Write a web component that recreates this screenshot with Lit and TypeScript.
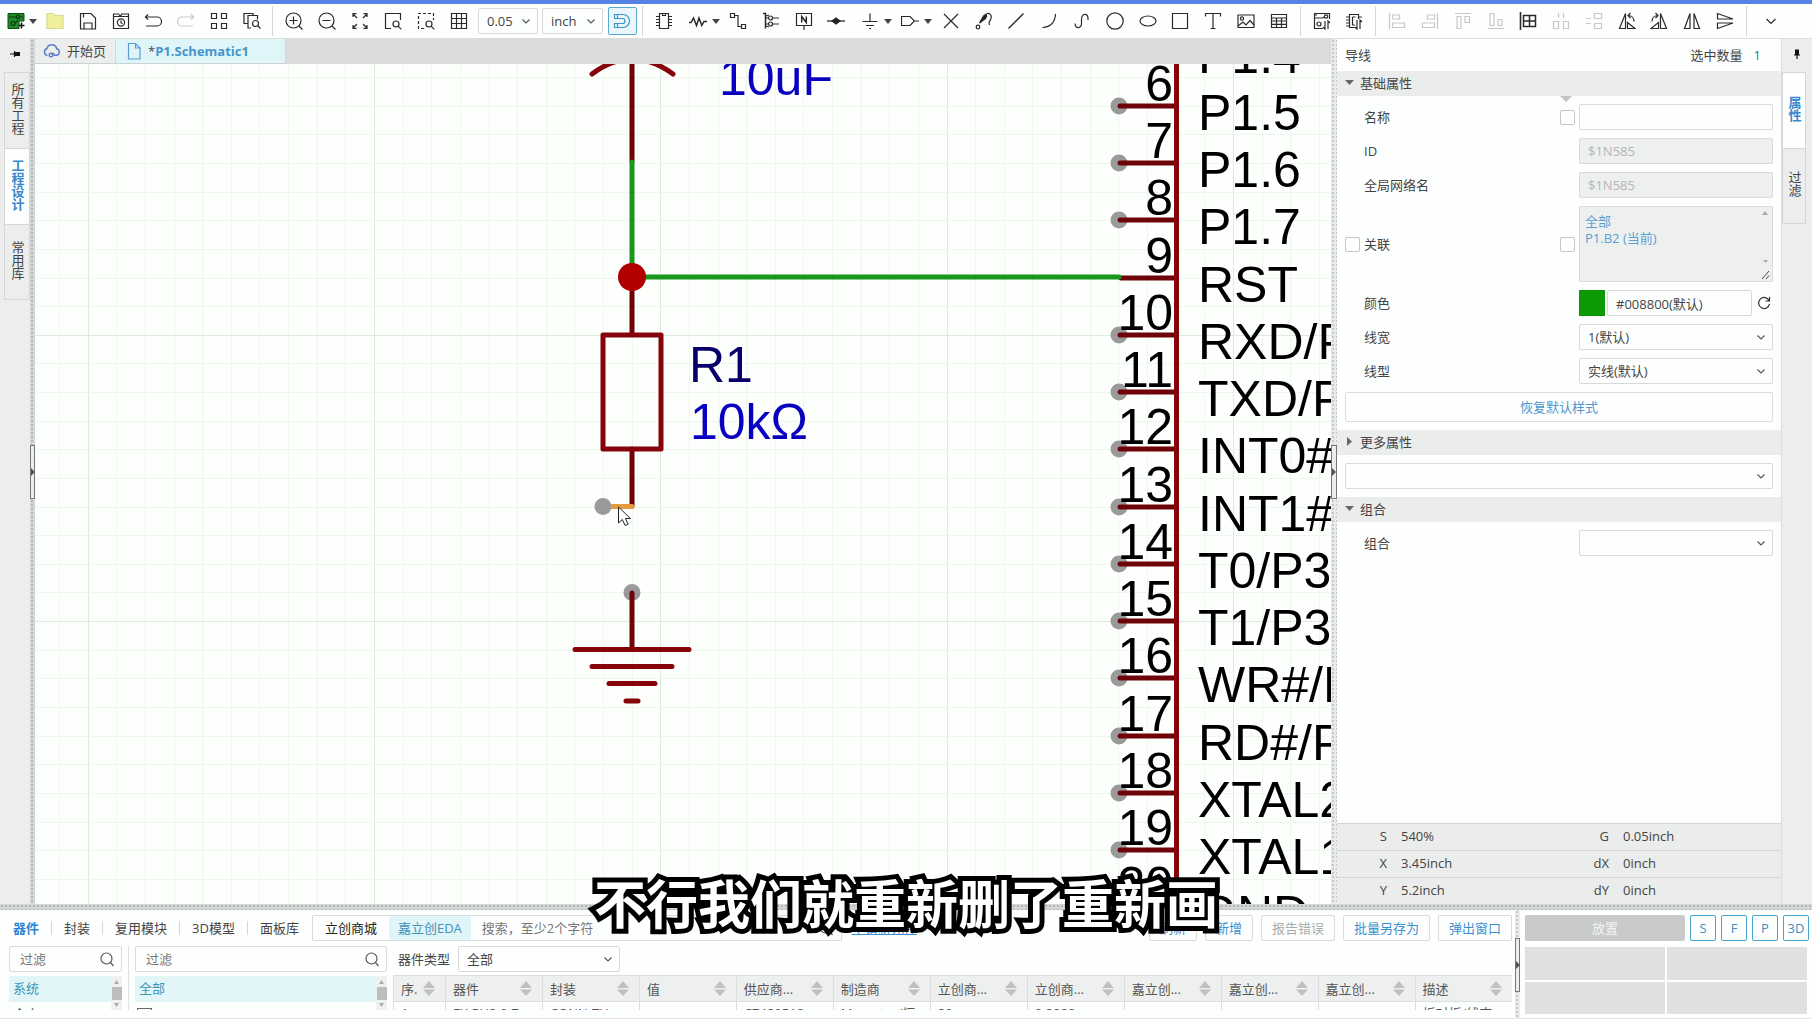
import { LitElement, html, svg, css, nothing, TemplateResult, SVGTemplateResult } from "lit";
import { customElement, property } from "lit/decorators.js";
import { classMap } from "lit/directives/class-map.js";

/* Icon shapes, drawn in an 18 x 18 box */
const ICONS: Record<string, SVGTemplateResult> = {
  new: svg`<path d="M1 1.500h16v7.500h-5v7.500H1z" fill="#1f8a26" stroke="#0c4a12" stroke-width="1"/>
    <circle cx="6" cy="11.500" r="2" stroke="#0a3d10"/><circle cx="11" cy="5" r="1.600" stroke="#0a3d10"/><path d="M2 5h7M12.500 5H16M8 11l3-2.500" stroke="#0a3d10"/>
    <path d="M14.500 10.500v6M11.500 13.500h6" stroke="#111" stroke-width="1.500"/>`,
  folder: svg`<path d="M1 1.500h6l2 2h8v13H1z" fill="#f0ef9c" stroke="#dcd98a"/>`,
  save: svg`<path d="M1.500 1.500h10.500l4.500 4.500v11h-15zM5 17v-6h8v6M4.500 1.500v4"/>`,
  history: svg`<path d="M1.500 2h5l2 2.500h8v12h-15zM1.500 4.500h15M8.500 4.500l1-2.500h7v2.500"/><circle cx="9" cy="10.500" r="3.600"/><path d="M9 8.500v2.200l1.500 1"/>`,
  undo: svg`<path d="M4 2.500 1.500 5 4 7.500M1.500 5h11.500a4.500 4.500 0 0 1 0 9H2"/>`,
  redo: svg`<path d="M14 2.500 16.500 5 14 7.500M16.500 5H5a4.500 4.500 0 0 0 0 9h11"/>`,
  four: svg`<path d="M1.500 1.500h5v5h-5zM11.500 1.500h5v5h-5zM1.500 11.500h5v5h-5zM11.500 11.500h5v5h-5z"/>`,
  find: svg`<path d="M5 11.500H1v-10h9v2M8 16H5V3.500h9.500v4"/><circle cx="12.500" cy="11.500" r="3"/><path d="m15 14 2.500 2.500"/>`,
  zoomin: svg`<circle cx="8.500" cy="8.500" r="7.500"/><path d="m14 14 3.500 3.500M8.500 4.500v8M4.500 8.500h8"/>`,
  zoomout: svg`<circle cx="8.500" cy="8.500" r="7.500"/><path d="m14 14 3.500 3.500M4.500 8.500h8"/>`,
  fit: svg`<path d="m6 6-4-4M2 5V1.700h3.500M12 6l4-4M12.500 1.700H16V5M6 12l-4 4M2 13v3.300h3.500M12 12l4 4M12.500 16.300H16V13"/>`,
  region: svg`<path d="M7 16.500H1.500v-15h15V8"/><circle cx="12" cy="12" r="3"/><path d="m14.300 14.300 3 3"/>`,
  selzoom: svg`<path d="M7 16.500H1.500v-15h15V8" stroke-dasharray="3 2"/><circle cx="12" cy="12" r="3"/><path d="m14.300 14.300 3 3"/>`,
  grid: svg`<path d="M1.500 1.500h15v15h-15zM6.500 1.500v15M11.500 1.500v15M1.500 6.500h15M1.500 11.500h15"/>`,
  magnet: svg`<path d="M1.500 2.500H10a6.300 6.300 0 0 1 0 13H1.500v-4h8a2.500 2.500 0 0 0 0-5h-8zM4.500 2.500v4M4.500 11.500v4" stroke="#3d95c8"/>`,
  chip: svg`<path d="M4.500 1.500h9v15h-9zM1 4.500h3.500M1 7.500h3.500M1 10.500h3.500M1 13.500h3.500M13.500 4.500H17M13.500 7.500H17M13.500 10.500H17M13.500 13.500H17M7.500 1.500v2h3v-2"/>`,
  resistor: svg`<path d="M0 10.500h2L4.500 6l3 7.500L10 6l2.800 7.500L15 9.500h3" stroke-width="1.500"/>`,
  wire: svg`<path d="M1.500 1.500h4v4h-4zM12.500 12.500h4v4h-4zM5.500 3.500h3.500v11h3.500"/>`,
  bus: svg`<path d="M1 1.500h2.500v15" stroke-width="1.500"/><circle cx="8.500" cy="6" r="2"/><circle cx="8.500" cy="12" r="2"/><path d="M3.500 6h3M10.500 6H17M3.500 12h3M10.500 12H17M4 4l3-1M4 14l3 1"/>`,
  net: svg`<path d="M1.500 1.500h15v12h-15zM9 13.500V18"/><path d="M6.700 10.500v-6l4.600 6v-6" stroke-width="1.500"/>`,
  junction: svg`<path d="M0 9h18" stroke-width="1.300"/><path d="m5 9 4-3 4 3-4 3z" fill="#222"/>`,
  ground: svg`<path d="M9 1.500v8M1.500 9.500h15M5 13.500h8M8 16.500h2"/>`,
  port: svg`<path d="M.500 4.500h8.500l4.500 4.500-4.500 4.500H.500zM13.500 9H18"/>`,
  cross: svg`<path d="m2 2 14 14M16 2 2 16"/>`,
  probe: svg`<path d="m4.500 11 4-7c3-3 4 0 2 2.500z" fill="#222"/><circle cx="3" cy="15" r="1.800"/><path d="M10 3c4-3.500 7-.500 6 3.500-.7 2.500-3 3.500-1.500 6.500"/>`,
  line: svg`<path d="M1.500 16.500 16.500 1.500" stroke-width="1.500"/>`,
  arc: svg`<path d="M15.500 2C15 10.500 10.500 15 2.500 15.500"/>`,
  spline: svg`<path d="M2 11.500C2.500 17 8 17 8.500 11.500V7C9 1 14.500 1 15 6v2"/>`,
  circle: svg`<circle cx="9" cy="9" r="8.200"/>`,
  ellipse: svg`<ellipse cx="9" cy="9" rx="8" ry="5"/>`,
  rect: svg`<path d="M1.500 1.500h15v15h-15z"/>`,
  text: svg`<path d="M1.500 4.500v-3h15v3M9 1.500v15M6.500 16.500h5"/>`,
  image: svg`<path d="M1 3h16v12.500H1z"/><circle cx="5" cy="6.500" r="1.600"/><path d="m1 14 5-4 3 3 4-4.500 4 4.500"/>`,
  table: svg`<path d="M1.500 2.500h15v13h-15zM1.500 6h15M1.500 9h15M1.500 12.300h15M6.500 6v9.500M11.500 6v9.500"/>`,
  topcb: svg`<path d="M10 16.500H1.500v-15h15V7M1.500 6H9"/><circle cx="13" cy="4.500" r="1.700"/><circle cx="6" cy="12" r="2"/><path d="M2 3h2M9 6l2.500-1M12 9v8l-2-2M15 17V9l2 2"/>`,
  tochip: svg`<path d="M10 15.500H4.500v-13h9V7M7.500 5h3M7.500 5v8H10M1 5h3.500M1 8h3.500M1 11h3.500M1 14h3.500M13.500 5H17M12 8v9l-2-2M15 17V8l2 2"/>`,
  alignl: svg`<path d="M1.500 1v16M4.500 3h7v4h-7zM4.500 11h12v4.500h-12z"/>`,
  alignr: svg`<path d="M16.500 1v16M6.500 3h7v4h-7zM1.500 11h12v4.500h-12z"/>`,
  alignt: svg`<path d="M1 1.500h16M3 4.500h4v12H3zM11 4.500h4.500v6H11z"/>`,
  alignb: svg`<path d="M1 16.500h16M3 1.500h4v12H3zM11 7.500h4v6h-4z"/>`,
  snapgrid: svg`<path d="M1.500 0v18" stroke-width="1.600"/><path d="M4.500 3.500h12v11h-12zM10.500 3.500v11M4.500 9h12" stroke-width="1.500"/>`,
  disth: svg`<path d="M6.500 1v5M11.500 1v5M1.500 9.500h5v7h-5zM11.500 9.500h5v7h-5z"/>`,
  distv: svg`<path d="M1 6.500h5M1 11.500h5M9.500 1.500h7v5h-7zM9.500 11.500h7v5h-7z"/>`,
  rotl: svg`<path d="M7.500 1.500v15h-6zM9.500 16.500l0-6 7.500 6zM10 3.500c3.500 0 6 2.500 6 6M12.500 1 10 3.500l2.500 2.500"/>`,
  rotr: svg`<path d="M10.500 1.500v15h6zM8.500 16.500v-6L1 16.500zM8 3.500C4.500 3.500 2 6 2 9.500M5.500 1 8 3.500 5.500 6"/>`,
  mirh: svg`<path d="M7 1.500v15H1.500zM11 1.500v15h5.500z"/>`,
  mirv: svg`<path d="M1.500 1.500v5.500H17zM1.500 16.500V11H17z"/>`,
  chevron: svg`<path d="m5.500 7.500 3.500 3.500 3.500-3.500" stroke="#555"/>`,
  more: svg`<path d="m4.500 7 4.500 4.500 4.500-4.500"/>`,
  search: svg`<circle cx="8.500" cy="8.500" r="5.500" stroke="#555"/><path d="m12.500 12.500 3 3.500" stroke="#555"/>`,
  reload: svg`<path d="M14 6.500A5.500 5.500 0 1 0 14.500 10M14.500 3v4h-4"/>`,
  cloud: svg`<path d="M4.500 13.500a3.600 3.600 0 0 1-.5-7 5 5 0 0 1 9.700.3 3.400 3.400 0 0 1 .3 6.500h-2.500l-2-2.500" stroke="#5a7fc8" stroke-width="1.500"/><circle cx="8" cy="13" r="1.800" stroke="#5a7fc8" stroke-width="1.400"/>`,
  doc: svg`<path d="M3.500 1.500h7l4.500 4.500v11h-11.500zM10.500 1.500v4.500H15" stroke="#5b9bd0"/>`,
  pin: svg`<path d="M4 9h4M8.500 6v6" stroke="#111"/><path d="M9 7h5v4H9z" fill="#111" stroke="none"/>`,
  pinv: svg`<path d="M9 10.500V14M6 10h6" stroke="#111"/><path d="M7 4.500h4V10H7z" fill="#111" stroke="none"/>`,
};

const icon = (name: string) => html`<svg class="ic" viewBox="0 0 18 18" width="18" height="18" aria-hidden="true">${ICONS[name]}</svg>`;
const caret = html`<svg class="caret" viewBox="0 0 8 5" width="8" height="5" aria-hidden="true"><path d="M0 0h8L4 5z" fill="#444"/></svg>`;

const shared = css`
  :host { font: 13px/18px "Open Sans", "Noto Sans CJK SC", sans-serif; color: #444; }
  * { box-sizing: border-box; }
  button, input, select, textarea { font: inherit; color: inherit; margin: 0; border-radius: 2px; }
  button { cursor: pointer; padding: 0; }
  .ic { fill: none; stroke: #2a2a2a; stroke-width: 1.2; display: block; flex: none; }
  .drop { display: grid; grid-template-columns: 1fr 24px; align-items: center; min-width: 0; }
  .drop select { grid-area: 1 / 1 / 2 / 3; width: 100%; height: 26px; appearance: none; background: #fdfffe; border: 1px solid #d8dad9; padding: 0 8px; }
  .drop .ic { grid-area: 1 / 2; pointer-events: none; justify-self: center; }
`;

const drop = (label: string, value: string, cls = "") => html`
  <div class="drop ${cls}">
    <select aria-label=${label}><option>${value}</option></select>${icon("chevron")}
  </div>`;

type Tool = { i: string; t: string; off?: boolean; menu?: boolean };
const T = (i: string, t: string, menu = false): Tool => ({ i, t, menu });
const D = (i: string, t: string): Tool => ({ i, t, off: true });

@customElement("eda-toolbar")
class EdaToolbar extends LitElement {
  static styles = [shared, css`
    :host { display: grid; grid-template-columns: 273fr 370fr 658fr 75fr 371fr 65fr; height: 39px; background: #fdfefe; border-top: 4px solid #5883e6; border-bottom: 1px solid #dcdedd; box-sizing: border-box; }
    .group { display: flex; align-items: center; padding: 0 5px; min-width: 0; border-right: 1px solid #d6d6d6; margin: 2px 0; }
    .group:first-child { padding: 0 4px 0 6px; }
    .group:last-child { border-right: 0; padding-left: 7px; }
    .tool { flex: 1 1 0; min-width: 0; height: 30px; border: 0; background: none; display: flex; align-items: center; justify-content: center; }
    .last { flex: 0 0 33px; }
    .menu { flex: 1 1 8px; gap: 5px; padding-left: 6px; }
    .lead { flex: 1 1 0; gap: 4px; }
    .off { opacity: 0.25; }
    .grid { width: 60px; margin-left: 3px; }
    .unit { width: 61px; margin: 0 5px 0 4px; }
    .snap { flex: 0 0 29px; height: 28px; border: 1px solid #58a8d4; background: #eaf6fb; }
    .caret { flex: none; }
  `];
  private tools(list: Tool[]) {
    return list.map((t) => html`<button class=${classMap({ tool: true, off: !!t.off, menu: !!t.menu && t.i !== "new", lead: t.i === "new" })} title=${t.t} ?disabled=${!!t.off}>${icon(t.i)}${t.menu ? caret : nothing}</button>`);
  }
  render() {
    return html`
      <div class="group">${this.tools([T("new", "新建", true), T("folder", "打开"), T("save", "保存"), T("history", "历史"), T("undo", "撤销"), D("redo", "重做"), T("four", "阵列"), T("find", "查找")])}</div>
      <div class="group">
        ${this.tools([T("zoomin", "放大"), T("zoomout", "缩小"), T("fit", "适合全部"), T("region", "适合区域"), T("selzoom", "适合选中"), T("grid", "网格")])}
        ${drop("网格尺寸", "0.05", "grid")}${drop("单位", "inch", "unit")}
        <button class="tool snap" title="吸附">${icon("magnet")}</button>
      </div>
      <div class="group">${this.tools([
        T("chip", "器件"), T("resistor", "电阻", true), T("wire", "导线"), T("bus", "总线"), T("net", "网络标签"), T("junction", "节点"),
        T("ground", "接地", true), T("port", "端口", true), T("cross", "非连接"), T("probe", "探针"), T("line", "折线"), T("arc", "圆弧"),
        T("spline", "贝塞尔"), T("circle", "圆形"), T("ellipse", "椭圆"), T("rect", "矩形"), T("text", "文本"), T("image", "图片"), T("table", "表格")])}</div>
      <div class="group">${this.tools([T("topcb", "更新到PCB"), T("tochip", "更新器件")])}</div>
      <div class="group">${this.tools([
        D("alignl", "左对齐"), D("alignr", "右对齐"), D("alignt", "顶对齐"), D("alignb", "底对齐"), T("snapgrid", "对齐网格"), D("disth", "水平分布"),
        D("distv", "垂直分布"), T("rotl", "左旋"), T("rotr", "右旋"), T("mirh", "左右翻转"), T("mirv", "上下翻转")])}</div>
      <div class="group"><button class="tool last" title="更多">${icon("more")}</button></div>`;
  }
}

@customElement("eda-dock")
class EdaDock extends LitElement {
  @property({ attribute: false }) tabs: string[] = [];
  @property() active = "";
  @property({ reflect: true }) side = "left";
  static styles = [shared, css`
    :host { display: flex; flex-direction: column; background: #eceeed; padding-left: 4px; }
    :host([side="right"]) { padding: 0; border-left: 1px solid #dcdedd; }
    .pin { border: 0; background: none; height: 33px; padding-bottom: 4px; display: grid; place-items: center; }
    :host([side="left"]) .pin { margin-right: 4px; }
    :host([side="right"]) .tab { margin-right: 6px; }
    .tab { height: 76px; border: 1px solid #d4d7d5; border-bottom-width: 0; border-radius: 0; background: #eceeed; display: grid; place-items: center; padding-bottom: 4px; font-size: 13px; line-height: 13px; }
    .tab:last-child { border-bottom-width: 1px; }
    .name { writing-mode: vertical-rl; text-orientation: upright; }
    .on { background: #fdfffe; color: #3a88cc; font-weight: 700; }
  `];
  render() {
    return html`<button class="pin" title="固定">${icon(this.side === "left" ? "pin" : "pinv")}</button>
      ${this.tabs.map(t => html`<button class=${classMap({ tab: true, on: t === this.active })}><span class="name">${t}</span></button>`)}`;
  }
}

@customElement("eda-schematic")
class EdaSchematic extends LitElement {
  static styles = css`
    :host { display: block; min-height: 0; min-width: 0; background: #fdfffd; overflow: hidden; }
    svg { display: block; width: 100%; height: 100%; }
    .minor { stroke: #eff6ef; }
    .major { stroke: #dfe9e0; }
    .sym { stroke: #850309; stroke-width: 5; fill: none; stroke-linecap: round; stroke-linejoin: round; }
    .lead { stroke: #6e0408; stroke-width: 5; stroke-linecap: round; }
    .net { stroke: #17981a; stroke-width: 5; stroke-linecap: round; }
    .end { fill: #999a99; }
    text { font: 50px "Liberation Sans", Arial, sans-serif; fill: #000; }
    .num { text-anchor: end; }
    .ref { fill: #060068; }
    .val { fill: #0a00c0; }
  `;
  private static pins = ["P1.4", "P1.5", "P1.6", "P1.7", "RST", "RXD/P", "TXD/P", "INT0#", "INT1#", "T0/P3", "T1/P3", "WR#/P", "RD#/P", "XTAL2", "XTAL1", "GND"];
  private grid() {
    const step = 28.63, out: SVGTemplateResult[] = [];
    for (let i = -1; i < 80; i++) {
      const x = Math.round(52.7 + i * step) + 0.5;
      out.push(svg`<path class=${i % 10 === 0 ? "major" : "minor"} d="M${x} 0V2000"/>`);
    }
    for (let i = -9; i < 50; i++) {
      const y = Math.round(270.8 + i * step) + 0.5;
      out.push(svg`<path class=${i % 10 === 0 ? "major" : "minor"} d="M0 ${y}H3000"/>`);
    }
    return out;
  }
  private pin(label: string, i: number) {
    const n = i + 5;
    const y = Math.round(41.9 + (n - 6) * 57.24);
    return svg`
      ${n === 9 ? nothing : svg`<circle class="end" cx="1084" cy=${y} r="8.500"/>`}
      <path class="lead" d="M${n === 9 ? 1086 : 1085} ${y}H1141"/>
      <text class="num" x="1138" y=${y - 5}>${n}</text>
      <text x="1163" y=${y + 24}>${label}</text>`;
  }
  render() {
    return html`<svg role="img" aria-label="原理图">
      ${this.grid()}
      ${EdaSchematic.pins.map((p, i) => this.pin(p, i))}
      <path class="sym" d="M1141.500 -5V900" stroke-width="6"/>
      <path class="sym" d="M557 10Q597 -20 638 10"/>
      <path class="lead" d="M597 -5V97M597 213V270M597 385V442"/>
      <path class="net" d="M597 98V213M597 213H1084"/>
      <circle cx="597" cy="213" r="14" fill="#b20000"/>
      <rect class="sym" x="568" y="271" width="58" height="114"/>
      <path d="M568 442.500H597" stroke="#e59a3e" stroke-width="5" stroke-linecap="round"/>
      <circle class="end" cx="568" cy="442.500" r="8.500"/>
      <circle class="end" cx="597" cy="528.500" r="8.500"/>
      <path class="lead" d="M597 529V585"/>
      <path class="sym" d="M540 585.500H654M557 602.500H637M574 619.500H620M591 637H603"/>
      <text class="val" x="684" y="31">10uF</text>
      <text class="ref" x="654" y="318">R1</text>
      <text class="val" x="655" y="375">10kΩ</text>
      <path d="M583.500 443v16l3.800-3.500 2.800 6 3-1.300-2.700-5.700h5z" fill="#fff" stroke="#222"/>
    </svg>`;
  }
}

@customElement("eda-properties")
class EdaProperties extends LitElement {
  static styles = [shared, css`
    :host { display: flex; flex-direction: column; background: #fdfffe; min-height: 0; }
    .title { display: flex; justify-content: space-between; align-items: center; height: 32px; padding: 0 20px 0 8px; }
    .count { display: flex; gap: 11px; }
    .num { color: #2b7a9a; }
    .head { height: 25px; border: 0; border-radius: 0; background: #ebedec; width: 100%; display: flex; align-items: center; gap: 6px; padding: 0 8px 2px; text-align: left; flex: none; }
    .rows { display: grid; gap: 8px; padding: 8px; }
    .row { display: grid; grid-template-columns: 15px 1fr 15px 194px; column-gap: 4px; align-items: center; min-height: 26px; }
    .label { grid-column: 2; }
    .field { grid-column: 4; min-width: 0; }
    .box { appearance: none; width: 15px; height: 15px; border: 1px solid #c3c5c4; background: #fff; }
    .lock { grid-column: 3; }
    .text { display: block; width: 100%; height: 26px; border: 1px solid #d8dad9; background: #fdfffe; padding: 0 8px; }
    .text:disabled { background: #edf0ee; color: #b3b6b4; }
    .area { display: grid; grid-template-columns: 1fr 14px; height: 76px; background: #edf0ee; border: 1px solid #d8dad9; border-radius: 2px; }
    .links { padding: 6px 5px; color: #5b9fd4; display: flex; flex-direction: column; line-height: 17px; }
    .links a { color: inherit; text-decoration: none; }
    .bars { display: flex; flex-direction: column; justify-content: space-between; align-items: center; padding-top: 4px; }
    .color { display: flex; gap: 2px; align-items: center; }
    .swatch { width: 26px; height: 26px; flex: none; border: 0; border-radius: 0; background: #0b9a06; }
    .color .text { flex: 1; min-width: 0; }
    .again { border: 0; background: none; width: 19px; display: grid; place-items: center; }
    .reset { height: 30px; background: #fdfffe; border: 1px solid #dcdedd; color: #4d97cf; }
    .drop.wide { width: 100%; }
    .marker { display: grid; grid-template-columns: 15px 1fr 15px 194px; column-gap: 4px; padding: 0 8px; height: 0; }
    .marker svg { grid-column: 3; }
    .status { margin-top: auto; display: grid; }
    .line { height: 27px; background: #ebedec; border-top: 1px solid #d3d6d4; display: grid; grid-template-columns: 1fr 1fr; align-items: center; padding-bottom: 2px; }
    .pair { display: flex; gap: 14px; }
    .key { width: 50px; text-align: right; }
  `];
  private row(id: string, label: string, field: TemplateResult, opts: { tick?: boolean; lock?: boolean } = {}) {
    return html`<div class="row">
      ${opts.tick ? html`<input class="box" type="checkbox" id="${id}-tick" />` : nothing}
      <label class="label" for=${opts.tick ? `${id}-tick` : id}>${label}</label>
      ${opts.lock ? html`<input class="box lock" type="checkbox" aria-label="${label}锁定" />` : nothing}
      <div class="field">${field}</div>
    </div>`;
  }
  private head(label: string, open: boolean) {
    return html`<button class="head" aria-expanded=${open}>
      <svg width="9" height="9" viewBox="0 0 9 9"><path d=${open ? "M0 2h9L4.500 7z" : "M2 0v9l5-4.500z"} fill="#666"/></svg>${label}</button>`;
  }
  private drop(id: string, value: string) {
    return html`<div class="drop"><select id=${id}><option>${value}</option></select>${icon("chevron")}</div>`;
  }
  render() {
    return html`
      <div class="title"><span>导线</span><span class="count"><span>选中数量</span><span class="num">1</span></span></div>
      ${this.head("基础属性", true)}
      <div class="marker"><svg width="12" height="6" viewBox="0 0 12 6"><path d="M0 0h12L6 6z" fill="#c3c5c4"/></svg></div>
      <div class="rows">
        ${this.row("name", "名称", html`<input class="text" id="name" />`, { lock: true })}
        ${this.row("ident", "ID", html`<input class="text" id="ident" value="$1N585" disabled />`)}
        ${this.row("gnet", "全局网络名", html`<input class="text" id="gnet" value="$1N585" disabled />`)}
        ${this.row("rel", "关联", html`<div class="area">
          <div class="links"><a href="#all">全部</a><a href="#b2">P1.B2 (当前)</a></div>
          <div class="bars"><svg width="6" height="4" viewBox="0 0 6 4"><path d="M0 4h6L3 0z" fill="#aaa"/></svg>
            <svg width="12" height="22" viewBox="0 0 12 22"><path d="M4 1h5L6.500 4z" fill="#aaa"/><path d="M3 20l7-8M7 20l3-3.500" stroke="#444"/></svg></div>
        </div>`, { tick: true, lock: true })}
        ${this.row("color", "颜色", html`<div class="color"><button class="swatch" title="颜色"></button><input class="text" id="color" value="#008800(默认)" /><button class="again" title="重置">${icon("reload")}</button></div>`)}
        ${this.row("lw", "线宽", this.drop("lw", "1(默认)"))}
        ${this.row("ls", "线型", this.drop("ls", "实线(默认)"))}
        <button class="reset">恢复默认样式</button>
      </div>
      ${this.head("更多属性", false)}
      <div class="rows">${drop("更多属性", "", "wide")}</div>
      ${this.head("组合", true)}
      <div class="rows">${this.row("grp", "组合", this.drop("grp", ""))}</div>
      <div class="status">
        ${[["S", "540%", "G", "0.05inch"], ["X", "3.45inch", "dX", "0inch"], ["Y", "5.2inch", "dY", "0inch"]].map(r => html`
          <div class="line"><div class="pair"><span class="key">${r[0]}</span><span>${r[1]}</span></div><div class="pair"><span class="key">${r[2]}</span><span>${r[3]}</span></div></div>`)}
      </div>`;
  }
}

@customElement("eda-library")
class EdaLibrary extends LitElement {
  static styles = [shared, css`
    :host { display: flex; flex-direction: column; min-width: 0; background: #fdfffe; padding: 5px 3px 8px 0; gap: 5px; overflow: hidden; border-bottom: 1px solid #e3e5e4; box-sizing: border-box; }
    .top { display: flex; align-items: center; height: 26px; flex: none; }
    .kind { border: 0; background: none; border-radius: 0; padding: 0 12px; line-height: 14px; border-right: 1px solid #d5d7d6; white-space: nowrap; }
    .kind:first-child { padding-left: 13px; }
    .plain { border-right: 0; padding-right: 13px; }
    .on { color: #2f86d4; font-weight: 700; }
    .find { display: flex; height: 26px; flex: 0 1 530px; min-width: 0; border: 1px solid #dadcdb; border-radius: 2px; align-items: center; padding-right: 6px; }
    .src { border: 0; background: none; height: 24px; padding: 0 12px; color: #222; white-space: nowrap; flex: none; }
    .sel { background: #dff5fa; color: #3d93b8; padding: 0 9px; }
    .find input { flex: 1; min-width: 0; border: 0; background: none; padding: 0 11px; height: 24px; outline: 0; }
    input::placeholder { color: #777; opacity: 1; }
    .req { color: #3a8fd0; margin-left: 10px; white-space: nowrap; }
    .acts { margin-left: auto; display: flex; gap: 8px; }
    .act { height: 26px; padding: 0 10px; border: 1px solid #dadcdb; background: #fdfffe; color: #3a8fd0; white-space: nowrap; }
    .act:disabled { color: #aaacab; }
    .body { display: flex; min-height: 0; flex: 1; }
    .side { width: 129px; padding: 0 6px 0 9px; border-right: 1px solid #e0e2e1; }
    .tree { width: 264px; padding: 0 6px; }
    .side, .tree { display: flex; flex-direction: column; gap: 4px; flex: none; }
    .filter { display: flex; align-items: center; height: 26px; flex: none; border: 1px solid #dadcdb; border-radius: 2px; padding-right: 5px; }
    .filter input { flex: 1; min-width: 0; border: 0; background: none; padding: 0 10px; height: 24px; outline: 0; }
    .pane { display: grid; grid-template-columns: 1fr 11px; flex: 1; min-height: 0; overflow: hidden; }
    .pane .items { overflow: hidden; }
    .item { height: 26px; line-height: 24px; padding: 0 4px; }
    .pick { background: #e2f5f7; color: #3a96ba; }
    .tick { display: block; appearance: none; width: 15px; height: 15px; border: 1px solid #666; margin: 6px 0 0 2px; border-radius: 0; }
    .bar { background: #eff1f0; display: flex; flex-direction: column; align-items: center; gap: 3px; padding-top: 4px; }
    .thumb { width: 10px; height: 13px; background: #bcbebd; flex: none; }
    .main { flex: 1; min-width: 0; display: flex; flex-direction: column; gap: 3px; overflow: hidden; }
    .type { display: flex; align-items: center; gap: 8px; padding-left: 5px; flex: none; height: 26px; }
    .type .drop { width: 162px; }
    .clip { overflow: hidden; flex: 1; min-height: 0; }
    table { width: 100%; border-collapse: collapse; table-layout: fixed; color: #555; }
    th, td { padding: 0 7px; font-weight: 400; text-align: left; border-left: 1px solid #dbdedc; overflow: hidden; white-space: nowrap; }
    th { height: 26px; background: #edf0ee; border-top: 1px solid #dbdedc; border-bottom: 1px solid #dbdedc; }
    td { height: 22px; }
    .seq { width: 52px; }
    .cell { display: flex; justify-content: space-between; align-items: center; }
    .cell svg { flex: none; margin-right: 3px; }
  `];
  private bar() {
    return html`<div class="bar"><svg width="5" height="4" viewBox="0 0 5 4"><path d="M0 4h5L2.500 0z" fill="#aaa"/></svg><span class="thumb"></span><svg width="5" height="4" viewBox="0 0 5 4"><path d="M0 0h5L2.500 4z" fill="#aaa"/></svg></div>`;
  }
  render() {
    const cols = ["序.", "器件", "封装", "值", "供应商...", "制造商", "立创商...", "立创商...", "嘉立创...", "嘉立创...", "嘉立创...", "描述"];
    const first = ["1", "EY-PH2.0-7", "CONN-TH", "", "C7429518", "Megastar/恒", "20", "0.2888", "", "", "", "板对板/线束"];
    return html`
      <div class="top">
        <button class="kind on">器件</button><button class="kind">封装</button><button class="kind">复用模块</button><button class="kind">3D模型</button><button class="kind plain">面板库</button>
        <div class="find"><button class="src">立创商城</button><button class="src sel">嘉立创EDA</button><input aria-label="搜索" placeholder="搜索，至少2个字符" />${icon("search")}</div>
        <a class="req" href="#request">申请新元件</a>
        <div class="acts"><button class="act">刷新</button><button class="act">新增</button><button class="act" disabled>报告错误</button><button class="act">批量另存为</button><button class="act">弹出窗口</button></div>
      </div>
      <div class="body">
        <div class="side">
          <div class="filter"><input aria-label="过滤分组" placeholder="过滤" />${icon("search")}</div>
          <div class="pane"><div class="items"><div class="item pick">系统</div><div class="item">个人</div></div>${this.bar()}</div>
        </div>
        <div class="tree">
          <div class="filter"><input aria-label="过滤分类" placeholder="过滤" />${icon("search")}</div>
          <div class="pane"><div class="items"><div class="item pick">全部</div><input class="tick" type="checkbox" aria-label="分类" /></div>${this.bar()}</div>
        </div>
        <div class="main">
          <div class="type"><label for="dtype">器件类型</label><div class="drop"><select id="dtype"><option>全部</option></select>${icon("chevron")}</div></div>
          <div class="clip"><table>
            <thead><tr>${cols.map((c, n) => html`<th class=${n === 0 ? "seq" : ""}><div class="cell"><span>${c}</span><svg width="12" height="15" viewBox="0 0 12 15"><path d="M0 7h12L6 0zM0 8.500h12L6 15z" fill="#bfc1c0"/></svg></div></th>`)}</tr></thead>
            <tbody><tr>${first.map(c => html`<td>${c}</td>`)}</tr></tbody>
          </table></div>
        </div>
      </div>`;
  }
}

@customElement("eda-preview")
class EdaPreview extends LitElement {
  static styles = [shared, css`
    :host { display: flex; flex-direction: column; gap: 6px; padding: 5px 3px 4px 5px; background: #fdfffe; border-bottom: 1px solid #e3e5e4; box-sizing: border-box; }
    .acts { display: flex; gap: 5px; }
    .place { flex: 1; height: 26px; border: 0; background: #c9cbca; color: #f4f4f4; }
    .view { width: 26px; height: 26px; border: 1px solid #4aa3cf; background: #fdfffe; color: #3d8fc0; }
    .panes { flex: 1; display: grid; grid-template-columns: 1fr 1fr; gap: 2px; padding-right: 2px; }
    .pane { background: #dfe0e0; }
  `];
  render() {
    return html`<div class="acts"><button class="place">放置</button>${["S", "F", "P", "3D"].map(v => html`<button class="view">${v}</button>`)}</div>
      <div class="panes"><div class="pane"></div><div class="pane"></div><div class="pane"></div><div class="pane"></div></div>`;
  }
}

@customElement("app-root")
class AppRoot extends LitElement {
  static styles = [shared, css`
    :host { display: flex; flex-direction: column; height: 100vh; overflow: hidden; background: #fdfffe; }
    .work { flex: 1; min-height: 0; display: grid; grid-template-columns: 30px 5px minmax(0, 1fr) 6px 444px 31px; }
    .split { background-color: #d3d6d4; background-image: radial-gradient(circle, #b4b8b6 1px, transparent 1px); background-size: 4px 4px; display: flex; align-items: center; }
    .pale { background-color: #e9ebea; background-image: radial-gradient(circle, #c6c9c7 1px, transparent 1px); }
    .grip { width: 100%; height: 54px; padding: 0; border: 1px solid #777; border-radius: 0; background: #eceeed; display: grid; place-items: center start; }
    .center { display: flex; flex-direction: column; min-width: 0; min-height: 0; }
    .docs { display: flex; height: 25px; background: #d9dcda; flex: none; }
    .doc { display: flex; align-items: center; border: 0; border-radius: 0; border-bottom: 1px solid #cdd3d1; background: #eceeed; gap: 6px; padding: 0 9px 1px 8px; border-right: 1px solid #d4d7d5; }
    .current { background: #dff5f9; color: #4696cc; padding: 0 36px 1px 9px; gap: 5px; }
    .star { color: #444; font-weight: 400; }
    .name { font-weight: 700; }
    eda-schematic { flex: 1; }
    .rule { height: 6px; flex: none; }
    .bottom { height: 109px; flex: none; display: grid; grid-template-columns: minmax(0, 1fr) 5px 292px; }
    .caption { position: absolute; left: 0; right: 0; bottom: 79px; margin: 0; text-align: center; pointer-events: none; font: 700 52px/76px "Noto Sans CJK SC", sans-serif; color: #fff; -webkit-text-stroke: 10px #000; paint-order: stroke fill; }
  `];
  private grip() {
    return html`<button class="grip" title="折叠"><svg width="4" height="8" viewBox="0 0 4 8"><path d="M0 0v8l4-4z" fill="#555"/></svg></button>`;
  }
  render() {
    return html`
      <eda-toolbar></eda-toolbar>
      <div class="work">
        <eda-dock side="left" .tabs=${["所有工程", "工程设计", "常用库"]} active="工程设计"></eda-dock>
        <div class="split">${this.grip()}</div>
        <div class="center">
          <nav class="docs">
            <button class="doc">${icon("cloud")}<span>开始页</span></button>
            <button class="doc current">${icon("doc")}<span class="name"><span class="star">*</span>P1.Schematic1</span></button>
          </nav>
          <eda-schematic></eda-schematic>
        </div>
        <div class="split pale">${this.grip()}</div>
        <eda-properties></eda-properties>
        <eda-dock side="right" .tabs=${["属性", "过滤"]} active="属性"></eda-dock>
      </div>
      <div class="split rule"></div>
      <div class="bottom">
        <eda-library></eda-library>
        <div class="split pale">${this.grip()}</div>
        <eda-preview></eda-preview>
      </div>
      <p class="caption">不行我们就重新删了重新画</p>`;
  }
}
